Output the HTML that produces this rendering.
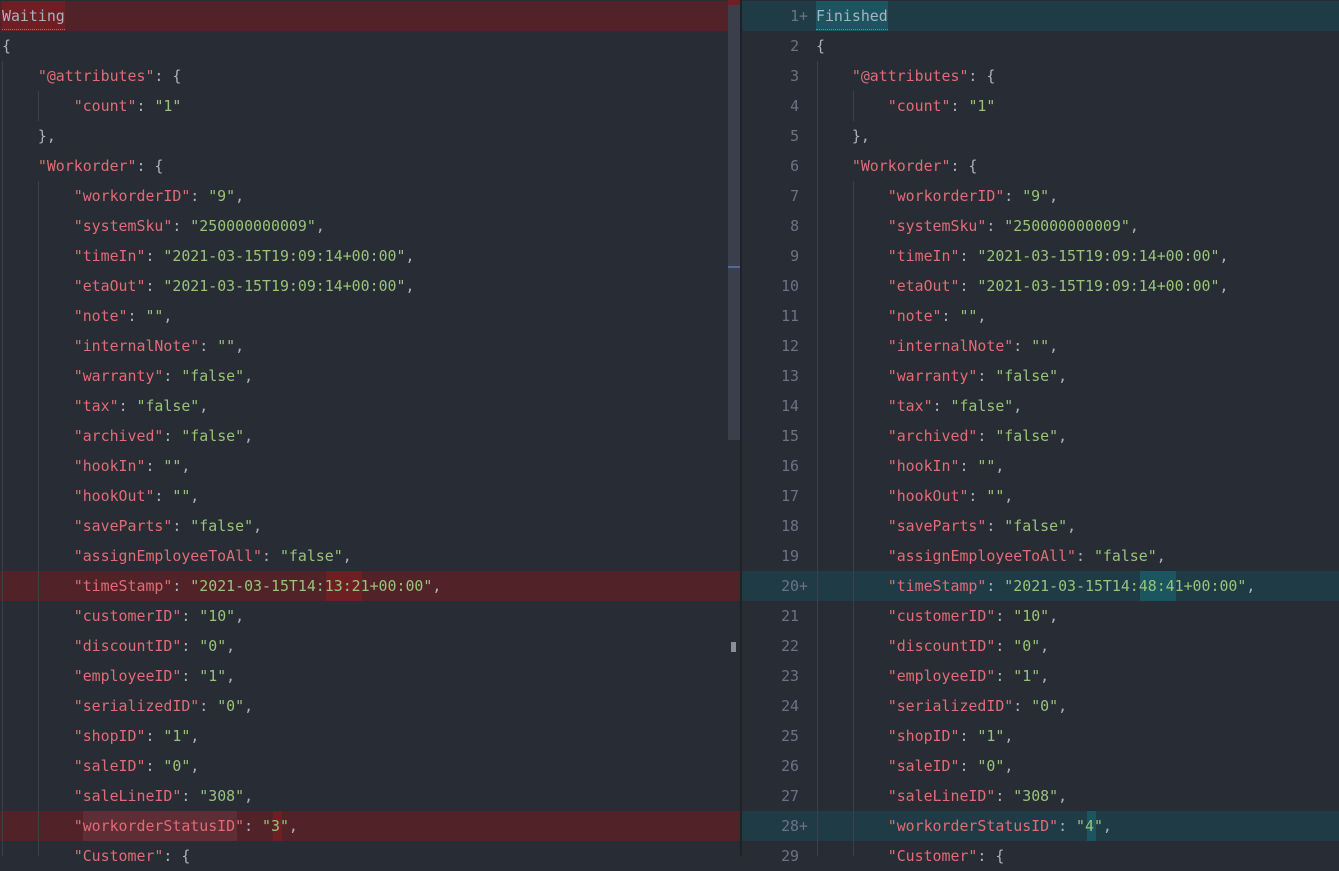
<!DOCTYPE html>
<html><head><meta charset="utf-8"><style>
body{margin:0;width:1339px;height:856px;background:#282c34;overflow:hidden;position:relative;font-family:"DejaVu Sans Mono","Liberation Mono",monospace;font-size:14.9px;}
.l{position:absolute;height:30px;line-height:30px;white-space:pre;color:#abb2bf;}
.k{color:#e06c75}.s{color:#98c379}
.g{position:absolute;width:1px;background:#3b404a}
.n{position:absolute;height:30px;line-height:30px;color:#6b7385;text-align:right;width:60px;white-space:pre}
</style></head><body>
<div style="position:absolute;left:0;top:1px;width:728px;height:30px;background:#512329"></div>
<div style="position:absolute;left:2px;top:1px;width:63px;height:30px;background:#6d1f24"></div>
<div style="position:absolute;left:0;top:571px;width:740px;height:30px;background:#512329"></div>
<div style="position:absolute;left:326px;top:571px;width:36px;height:30px;background:#6d1f24"></div>
<div style="position:absolute;left:0;top:811px;width:740px;height:30px;background:#512329"></div>
<div style="position:absolute;left:83px;top:811px;width:154px;height:30px;background:#5e2d35"></div>
<div style="position:absolute;left:273px;top:811px;width:9px;height:30px;background:#6d1f24"></div>
<div style="position:absolute;left:728px;top:0;width:12px;height:440px;background:#3a3f4b"></div>
<div style="position:absolute;left:728px;top:0;width:12px;height:5px;background:#6d1f24"></div>
<div style="position:absolute;left:728px;top:266px;width:12px;height:2px;background:#4d6a9a"></div>
<div style="position:absolute;left:731px;top:642px;width:5px;height:10px;background:#8a8f99"></div>
<div style="position:absolute;left:740px;top:0;width:2px;height:856px;background:#1e2127"></div>
<div style="position:absolute;left:742px;top:1px;width:597px;height:30px;background:#1f3b45"></div>
<div style="position:absolute;left:816px;top:1px;width:72px;height:30px;background:#1b5560"></div>
<div style="position:absolute;left:742px;top:571px;width:597px;height:30px;background:#1f3b45"></div>
<div style="position:absolute;left:1140px;top:571px;width:36px;height:30px;background:#1b5560"></div>
<div style="position:absolute;left:742px;top:811px;width:597px;height:30px;background:#1f3b45"></div>
<div style="position:absolute;left:1087px;top:811px;width:9px;height:30px;background:#1b5560"></div>
<div class="g" style="left:2px;top:61px;height:795px"></div>
<div class="g" style="left:38px;top:91px;height:30px"></div>
<div class="g" style="left:38px;top:181px;height:675px"></div>
<div class="g" style="left:817px;top:61px;height:795px"></div>
<div class="g" style="left:853px;top:91px;height:30px"></div>
<div class="g" style="left:853px;top:181px;height:675px"></div>
<div id="L"></div><div id="R"></div>
<script>
var lines=[
['Waiting',0,'raw'],['{',0,'raw'],
['@attributes',1,'{'],['count',2,'"1"'],['},',1,'raw'],['Workorder',1,'{'],
['workorderID',2,'"9",'],['systemSku',2,'"250000000009",'],['timeIn',2,'"2021-03-15T19:09:14+00:00",'],['etaOut',2,'"2021-03-15T19:09:14+00:00",'],
['note',2,'"",'],['internalNote',2,'"",'],['warranty',2,'"false",'],['tax',2,'"false",'],['archived',2,'"false",'],['hookIn',2,'"",'],['hookOut',2,'"",'],['saveParts',2,'"false",'],['assignEmployeeToAll',2,'"false",'],
['timeStamp',2,'"2021-03-15T14:13:21+00:00",'],['customerID',2,'"10",'],['discountID',2,'"0",'],['employeeID',2,'"1",'],['serializedID',2,'"0",'],['shopID',2,'"1",'],['saleID',2,'"0",'],['saleLineID',2,'"308",'],['workorderStatusID',2,'"3",'],['Customer',2,'{']];
function esc(t){return t.replace(/&/g,'&amp;').replace(/</g,'&lt;')}
function render(x0,right){var h='';lines.forEach(function(a,i){var t=a[0],ind=a[1],v=a[2];
 if(right){if(i==0)t='Finished';if(i==19)v='"2021-03-15T14:48:41+00:00",';if(i==27)v='"4",';}
 var c;var pad='    '.repeat(ind);
 if(v=='raw')c=pad+esc(t);
 else{var val;if(v=='{')val='{';else{var m=v.match(/^(".*")(,?)$/);val='<span class="s">'+m[1]+'</span>'+m[2];}
 c=pad+'<span class="k">"'+t+'"</span>: '+val;}
 var y=1+30*i;
 h+='<div class="l" style="left:'+x0+'px;top:'+y+'px">'+c+'</div>';
 if(right){var mk=(i==0||i==19||i==27)?'+':' ';h+='<div class="n" style="left:748px;top:'+y+'px">'+(i+1)+mk+'</div>';}
 });return h;}
document.getElementById('L').innerHTML=render(2,false);
document.getElementById('R').innerHTML=render(816,true);
</script>
<div style="position:absolute;left:2px;top:26px;width:63px;height:3px;border-bottom:1px dotted #d0605a"></div>
<div style="position:absolute;left:816px;top:26px;width:72px;height:3px;border-bottom:1px dotted #d0605a"></div>
</body></html>
